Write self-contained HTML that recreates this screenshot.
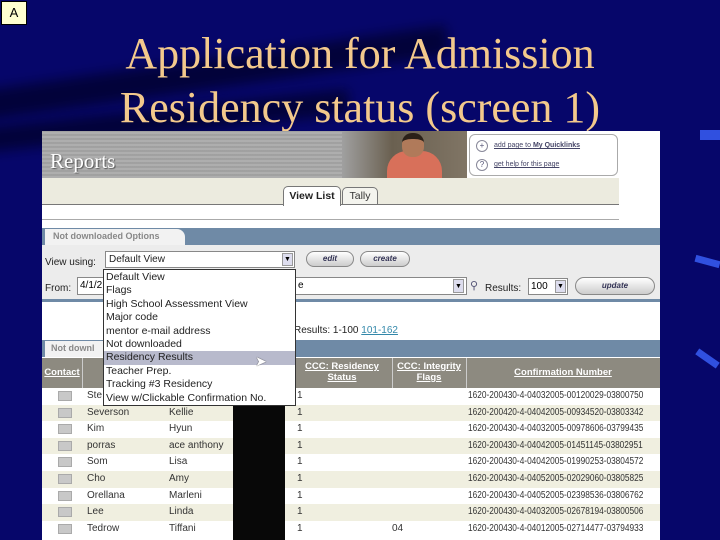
<!DOCTYPE html><html><head><style>
*{margin:0;padding:0;box-sizing:border-box}
body{width:720px;height:540px;overflow:hidden;background:#06066a;position:relative;font-family:"Liberation Sans",sans-serif}
.a{position:absolute}
.t{font-family:"Liberation Serif",serif;color:#f3c98c;font-size:44px;text-align:center;width:720px;left:0;line-height:1}
.s{font-size:10px;color:#222;white-space:nowrap}
.u{color:#fff;text-decoration:underline;font-weight:bold;font-size:9.5px;text-align:center}
.row{position:absolute;left:42px;width:618px;height:16.6px}
.row span{position:absolute;top:2px;font-size:10px;color:#333;white-space:nowrap}
.row span.c{transform:scaleX(0.83);transform-origin:0 0}
.ic{position:absolute;left:16px;top:3px;width:14px;height:10px;background:#c8c8c8;border:1px solid #aaa}
.btn{position:absolute;border:1px solid #888;border-radius:9px;background:linear-gradient(#fff,#ccc);font-size:8px;font-style:italic;font-weight:bold;color:#335;text-align:center;line-height:14px}
</style></head><body>
<div class="a" style="left:-50px;top:60px;width:500px;height:30px;background:#02023a;transform:rotate(-8deg);filter:blur(6px)"></div>
<div class="a" style="left:-50px;top:110px;width:400px;height:25px;background:#02023a;transform:rotate(-6deg);filter:blur(6px)"></div>
<div class="a" style="left:1px;top:1px;width:26px;height:24px;background:#ffffd0;border:1px solid #000;font-size:13px;text-align:center;line-height:22px">A</div>
<div class="a t" style="top:32px">Application for Admission</div>
<div class="a t" style="top:86px">Residency status (screen 1)</div>
<div class="a" style="left:700px;top:130px;width:20px;height:10px;background:#3050e0"></div>
<div class="a" style="left:695px;top:258px;width:25px;height:7px;background:#3050e0;transform:rotate(15deg)"></div>
<div class="a" style="left:695px;top:355px;width:25px;height:7px;background:#3050e0;transform:rotate(35deg)"></div>

<div class="a" style="left:42px;top:131px;width:618px;height:409px;background:#fff;overflow:hidden">
 <div class="a" style="left:0;top:0;width:425px;height:47px;background:repeating-linear-gradient(#9a9a9a 0,#b5b5b5 2px,#9a9a9a 4px)"></div>
 <div class="a" style="left:8px;top:18px;font-family:'Liberation Serif',serif;font-size:21px;color:#fff;text-shadow:1px 1px 1px #555">Reports</div>
 <div class="a" style="left:300px;top:0;width:125px;height:47px;background:linear-gradient(90deg,#a0a0a0,#6a6050 40%,#807565)"></div>
 <div class="a" style="left:345px;top:20px;width:55px;height:27px;background:#d8705a;border-radius:20px 20px 0 0"></div>
 <div class="a" style="left:360px;top:2px;width:22px;height:24px;background:#b07a5a;border-radius:10px;border-top:6px solid #2a2018"></div>
 <div class="a" style="left:427px;top:3px;width:149px;height:42px;border:1px solid #aaa;border-radius:6px;background:#fff"></div>
 <div class="a" style="left:434px;top:9px;width:12px;height:12px;border:1px solid #889;border-radius:50%;font-size:8px;text-align:center;line-height:10px;color:#557">+</div>
 <div class="a" style="left:434px;top:28px;width:12px;height:12px;border:1px solid #889;border-radius:50%;font-size:8px;text-align:center;line-height:10px;color:#557">?</div>
 <div class="a" style="left:452px;top:11px;font-size:7px;color:#446;text-decoration:underline">add page to <b>My Quicklinks</b></div>
 <div class="a" style="left:452px;top:30px;font-size:7px;color:#446;text-decoration:underline">get help for this page</div>
 <div class="a" style="left:0;top:47px;width:577px;height:27px;background:#ecebdf;border-bottom:1px solid #777"></div>
 <div class="a" style="left:241px;top:55px;width:58px;height:20px;background:#fff;border:1px solid #777;border-bottom:none;border-radius:5px 5px 0 0;font-size:10.5px;font-weight:bold;text-align:center;line-height:18px;color:#222">View List</div>
 <div class="a" style="left:300px;top:56px;width:36px;height:18px;background:#f4f4ee;border:1px solid #777;border-radius:5px 5px 0 0;font-size:10.5px;text-align:center;line-height:17px;color:#333">Tally</div>
 <div class="a" style="left:0;top:88px;width:577px;height:1px;background:#aaa"></div>
 <div class="a" style="left:0;top:97px;width:618px;height:17px;background:#6f8aa6"></div>
 <div class="a" style="left:3px;top:98px;width:140px;height:16px;background:#f2f2f2;border-radius:0 8px 0 0;font-size:9px;font-weight:bold;color:#888;padding:2px 8px">Not downloaded Options</div>
 <div class="a" style="left:0;top:114px;width:618px;height:55px;background:#ececec"></div>
 <div class="a s" style="left:3px;top:126px">View using:</div>
 <div class="a" style="left:63px;top:120px;width:190px;height:17px;border:1px solid #888;background:#fff;font-size:10px;padding:2px 3px;color:#222">Default View</div>
 <div class="a" style="left:240px;top:122px;width:11px;height:13px;background:#dde;border:1px solid #999;font-size:7px;text-align:center;line-height:12px">▼</div>
 <div class="btn" style="left:264px;top:120px;width:48px;height:16px">edit</div>
 <div class="btn" style="left:318px;top:120px;width:50px;height:16px">create</div>
 <div class="a s" style="left:3px;top:152px">From:</div>
 <div class="a" style="left:35px;top:146px;width:30px;height:18px;border:1px solid #888;background:#fff;font-size:10px;padding:2px">4/1/2</div>
 <div class="a" style="left:253px;top:146px;width:172px;height:18px;border:1px solid #888;background:#fff;font-size:10px;padding:2px">e</div>
 <div class="a" style="left:411px;top:148px;width:11px;height:14px;background:#dde;border:1px solid #999;font-size:7px;text-align:center;line-height:13px">▼</div>
 <div class="a" style="left:428px;top:148px;font-size:11px;color:#557">⚲</div>
 <div class="a s" style="left:443px;top:152px">Results:</div>
 <div class="a" style="left:486px;top:147px;width:40px;height:17px;border:1px solid #888;background:#fff;font-size:10px;padding:2px">100</div>
 <div class="a" style="left:513px;top:149px;width:11px;height:13px;background:#dde;border:1px solid #999;font-size:7px;text-align:center;line-height:12px">▼</div>
 <div class="btn" style="left:533px;top:146px;width:80px;height:18px;line-height:16px">update</div>
 <div class="a" style="left:0;top:168px;width:618px;height:3px;background:#6f8aa6"></div>
 <div class="a s" style="left:252px;top:194px">Results: 1-100 <span style="color:#38a;text-decoration:underline">101-162</span></div>
 <div class="a" style="left:0;top:209px;width:618px;height:17px;background:#6f8aa6"></div>
 <div class="a" style="left:3px;top:210px;width:80px;height:16px;background:#f2f2f2;font-size:9px;font-weight:bold;color:#888;padding:2px 6px">Not downl</div>
 <div class="a" style="left:0;top:227px;width:618px;height:30px;background:#8d8a80"></div>
 <div class="a u" style="left:2px;top:236px;width:36px">Contact</div>
 <div class="a u" style="left:252px;top:230px;width:96px">CCC: Residency<br>Status</div>
 <div class="a u" style="left:350px;top:230px;width:74px">CCC: Integrity<br>Flags</div>
 <div class="a u" style="left:424px;top:236px;width:194px">Confirmation Number</div>
 <div class="a" style="left:40px;top:227px;width:1px;height:30px;background:#ccc"></div>
 <div class="a" style="left:350px;top:227px;width:1px;height:30px;background:#ccc"></div>
 <div class="a" style="left:424px;top:227px;width:1px;height:30px;background:#ccc"></div>
</div>
<div style="position:absolute;top:388px;left:0">
 <div class="row" style="top:0;background:#fff"><i class="ic"></i><span style="left:45px">Ste</span><span style="left:255px">1</span><span class="c" style="left:426px">1620-200430-4-04032005-00120029-03800750</span></div>
 <div class="row" style="top:16.6px;background:#f0efe0"><i class="ic"></i><span style="left:45px">Severson</span><span style="left:127px">Kellie</span><span style="left:255px">1</span><span class="c" style="left:426px">1620-200420-4-04042005-00934520-03803342</span></div>
 <div class="row" style="top:33.2px;background:#fff"><i class="ic"></i><span style="left:45px">Kim</span><span style="left:127px">Hyun</span><span style="left:255px">1</span><span class="c" style="left:426px">1620-200430-4-04032005-00978606-03799435</span></div>
 <div class="row" style="top:49.8px;background:#f0efe0"><i class="ic"></i><span style="left:45px">porras</span><span style="left:127px">ace anthony</span><span style="left:255px">1</span><span class="c" style="left:426px">1620-200430-4-04042005-01451145-03802951</span></div>
 <div class="row" style="top:66.4px;background:#fff"><i class="ic"></i><span style="left:45px">Som</span><span style="left:127px">Lisa</span><span style="left:255px">1</span><span class="c" style="left:426px">1620-200430-4-04042005-01990253-03804572</span></div>
 <div class="row" style="top:83px;background:#f0efe0"><i class="ic"></i><span style="left:45px">Cho</span><span style="left:127px">Amy</span><span style="left:255px">1</span><span class="c" style="left:426px">1620-200430-4-04052005-02029060-03805825</span></div>
 <div class="row" style="top:99.6px;background:#fff"><i class="ic"></i><span style="left:45px">Orellana</span><span style="left:127px">Marleni</span><span style="left:255px">1</span><span class="c" style="left:426px">1620-200430-4-04052005-02398536-03806762</span></div>
 <div class="row" style="top:116.2px;background:#f0efe0"><i class="ic"></i><span style="left:45px">Lee</span><span style="left:127px">Linda</span><span style="left:255px">1</span><span class="c" style="left:426px">1620-200430-4-04032005-02678194-03800506</span></div>
 <div class="row" style="top:132.8px;background:#fff"><i class="ic"></i><span style="left:45px">Tedrow</span><span style="left:127px">Tiffani</span><span style="left:255px">1</span><span style="left:350px">04</span><span class="c" style="left:426px">1620-200430-4-04012005-02714477-03794933</span></div>
</div>
<div class="a" style="left:233px;top:405px;width:52px;height:135px;background:#080808"></div>
<div class="a" style="left:103px;top:269px;width:193px;height:137px;background:#fff;border:1px solid #333;font-size:10.5px;line-height:13.4px;color:#222;padding:1px 2px">
Default View<br>Flags<br>High School Assessment View<br>Major code<br>mentor e-mail address<br>Not downloaded<br><span style="display:block;background:#b8bacc;margin:0 -2px;padding:0 2px">Residency Results</span>Teacher Prep.<br>Tracking #3 Residency<br>View w/Clickable Confirmation No.</div>
<div class="a" style="left:255px;top:353px;font-size:14px;color:#fff;text-shadow:0 0 1px #000">➤</div>
</body></html>
